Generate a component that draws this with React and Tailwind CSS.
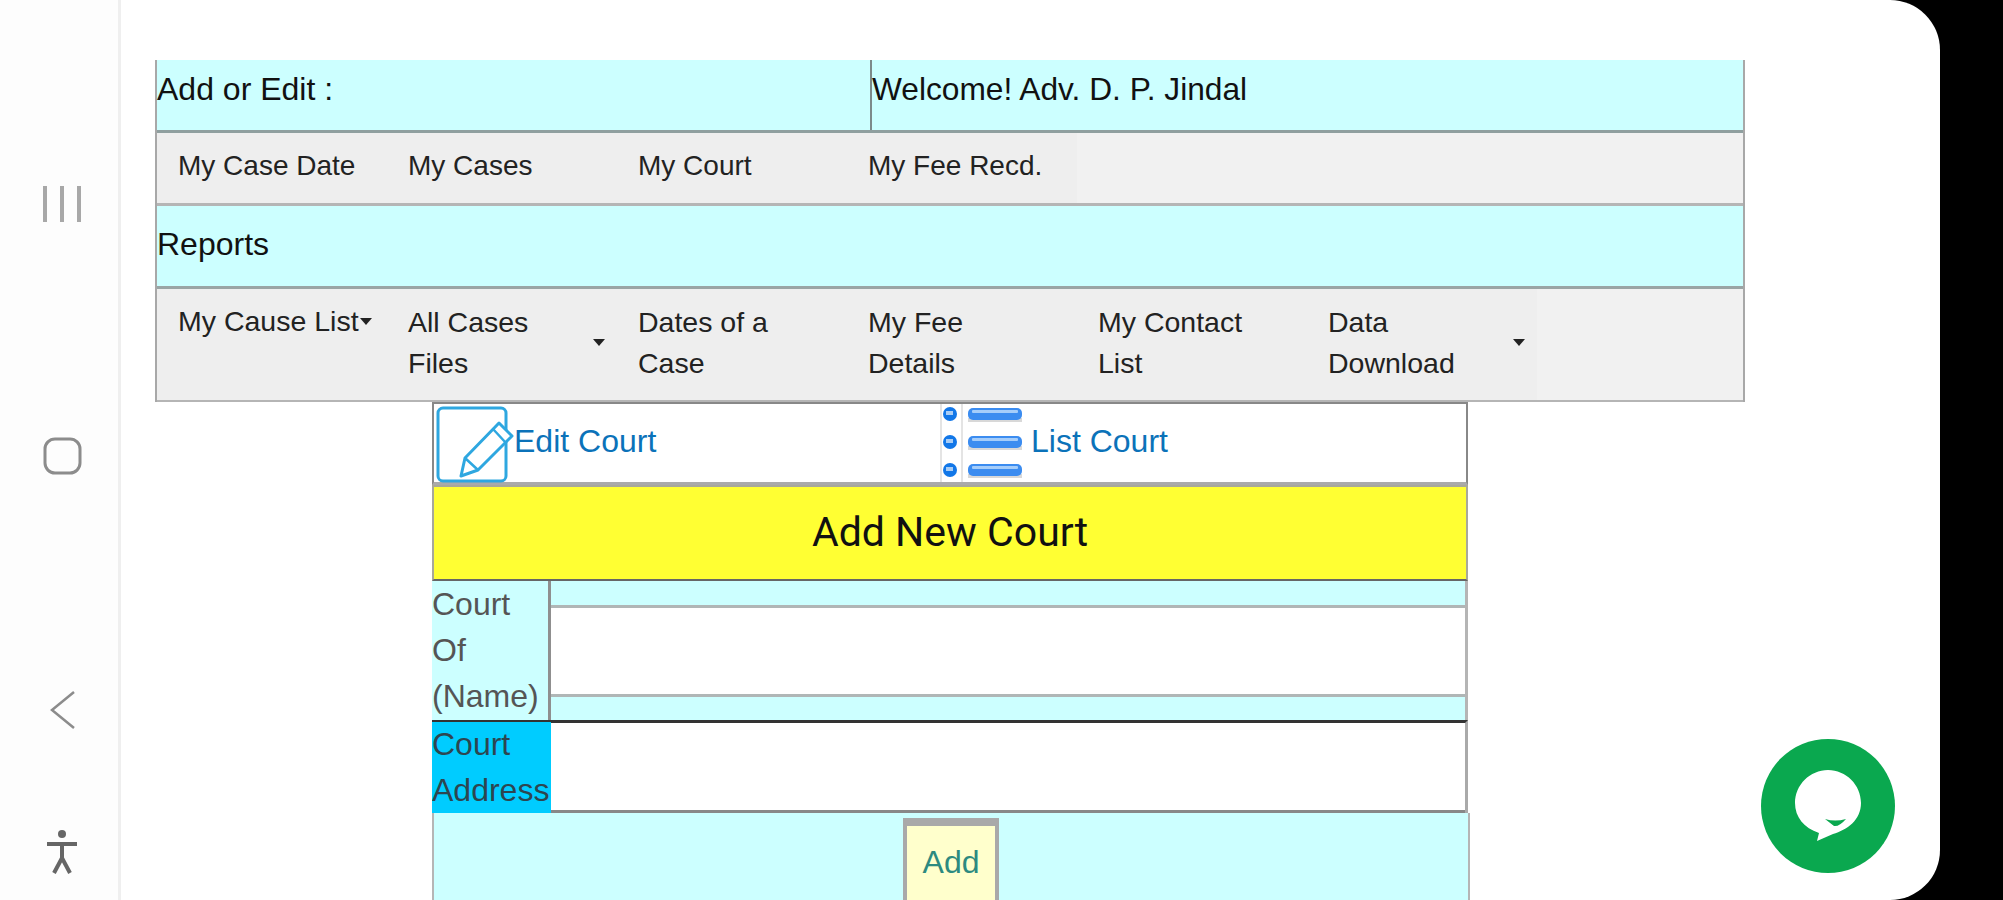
const sans = 'font-["Liberation_Sans",Arial,sans-serif]'

function Caret({ className = '' }) {
  return (
    <svg viewBox="0 0 12 7" className={`w-[12px] h-[7px] shrink-0 ${className}`}>
      <path d="M0 0h12L6 7z" fill="#222" />
    </svg>
  )
}

function NavCell({ children, caret, nowrap }) {
  return (
    <div className={`w-[230px] flex items-center justify-between bg-[#eeeeee] pl-[21px] pr-[12px] ${nowrap ? 'whitespace-nowrap pb-[4px]' : 'pb-[4px]'}`}>
      <span className={nowrap ? '' : 'max-w-[160px]'}>{children}</span>
      {caret && <Caret />}
    </div>
  )
}

function EditIcon() {
  return (
    <svg viewBox="0 0 72 78" className="w-[72px] h-[78px] shrink-0 overflow-visible" fill="none" stroke="#2ea7e0">
      <rect x="3" y="4" width="68" height="73" rx="5" strokeWidth="3" />
      <path d="M77 32 L64 19 L30 54 L26 72 L43 66 Z" fill="#fff" strokeWidth="3" strokeLinejoin="round" />
      <path d="M58 25 L71 39 M30 54 L43 66" strokeWidth="2.5" />
    </svg>
  )
}

function ListIcon() {
  const rows = [4, 32, 60]
  return (
    <svg viewBox="0 0 82 78" className="w-[82px] h-[78px] shrink-0">
      <path d="M1 0V78M22 0V78" stroke="#e4e4e4" strokeWidth="2" />
      {rows.map((y) => (
        <g key={y}>
          <rect x="28" y={y + 10} width="56" height="4" fill="#d8d8d8" />
          <circle cx="10" cy={y + 6} r="7" fill="#1277e8" />
          <rect x="6" y={y + 3} width="7" height="4" fill="#a9cdf5" />
          <rect x="28" y={y} width="54" height="12" rx="5" fill="#3b8cf0" />
          <rect x="32" y={y + 2} width="46" height="3" rx="1" fill="#a5cdfa" />
        </g>
      ))}
    </svg>
  )
}

function RailIcons() {
  return (
    <div className="w-[121px] h-full shrink-0 bg-[#fdfdfd] border-r-[3px] border-[#efefef]">
      <svg viewBox="0 0 118 900" className="w-[118px] h-[900px]" fill="none" stroke="#8c8c8c">
        <path d="M45 186V222M62 186V222M79 186V222" strokeWidth="4" stroke="#a8a8a8" />
        <rect x="45" y="439" width="35" height="34" rx="10" strokeWidth="3" />
        <path d="M74 692L52 710L74 728" strokeWidth="2.5" />
        <circle cx="62" cy="834" r="4" fill="#666" stroke="none" />
        <path d="M47 844H77M62 844V860M62 858L54 873M62 858L70 873" stroke="#666" strokeWidth="4" />
      </svg>
    </div>
  )
}

export default function App() {
  return (
    <div className={`w-[2003px] h-[900px] overflow-hidden bg-black flex ${sans}`}>
      <div className="w-[1940px] h-full flex bg-white rounded-r-[50px] overflow-hidden">
        <RailIcons />
        <main className="flex-1 pt-[60px] pl-[34px] relative">
          {/* 顶部表格 */}
          <div className="w-[1590px] border-l-2 border-r-2 border-[#a8a8a8] text-[32px] text-[#111]">
            <div className="h-[73px] bg-[#ccffff] border-b-[3px] border-[#8f9f9f] flex">
              <div className="w-[715px] pt-[7px] leading-[44px] border-r-2 border-[#7c8a8a]">Add or Edit :</div>
              <div className="pt-[7px] leading-[44px] text-[31.7px]">Welcome! Adv. D. P. Jindal</div>
            </div>
            <div className="h-[73px] bg-[#f1f1f1] border-b-[3px] border-[#b5b5b5] flex text-[28px] text-[#222]">
              <NavCell nowrap>My Case Date</NavCell>
              <NavCell nowrap>My Cases</NavCell>
              <NavCell nowrap>My Court</NavCell>
              <NavCell nowrap>My Fee Recd.</NavCell>
            </div>
            <div className="h-[83px] pb-[4px] bg-[#ccffff] border-b-[3px] border-[#9aa5a5] flex items-center">Reports</div>
            <div className="h-[113px] bg-[#f1f1f1] border-b-2 border-[#b5b5b5] flex text-[28.5px] leading-[41px] text-[#222]">
              <div className="w-[230px] flex items-start bg-[#eeeeee] pl-[21px] pt-[12px] whitespace-nowrap">
                My Cause List<Caret className="mt-[17px] ml-[1px]" />
              </div>
              <NavCell caret>All Cases Files</NavCell>
              <NavCell>Dates of a Case</NavCell>
              <NavCell>My Fee Details</NavCell>
              <NavCell>My Contact List</NavCell>
              <NavCell caret>Data Download</NavCell>
            </div>
          </div>

          {/* 法院表单 */}
          <div className="w-[1036px] ml-[277px]">
            <div className="h-[83px] flex items-center border-2 border-b-[3px] border-[#888] border-b-[#aaa] bg-white pl-[1px] text-[32px] text-[#0b72b9]">
              <div className="w-[505px] flex items-center">
                <EditIcon />
                <span className="ml-[7px] -mt-[5px]">Edit Court</span>
              </div>
              <div className="flex items-center">
                <ListIcon />
                <span className="ml-[9px] -mt-[5px]">List Court</span>
              </div>
            </div>
            <div className="h-[96px] bg-[#ffff33] border-2 border-[#a8a89a] border-b-[#666] flex items-center justify-center font-['Roboto',sans-serif] text-[41px] text-[#111]">
              Add New Court
            </div>
            <div className="flex h-[139px] bg-[#ccffff] text-[32px] leading-[46px] text-[#555] border-r-[3px] border-[#b5b5b5]">
              <div className="w-[119px] shrink-0 border-r-[3px] border-[#8f8f8f]">
                Court
                <br />
                Of
                <br />
                (Name)
              </div>
              <div className="flex-1 pt-[24px]">
                <div className="h-[92px] bg-white border-t-[3px] border-b-[3px] border-[#b0b6b6]" />
              </div>
            </div>
            <div className="flex h-[93px] text-[32px] leading-[46px] text-[#2d4650] border-t-[3px] border-[#333] border-r-[3px] border-r-[#aaa]">
              <div className="w-[119px] shrink-0 bg-[#00ccff] whitespace-nowrap overflow-hidden -mt-[1px]">
                <div className="-mt-[1px]">
                  Court
                  <br />
                  Address
                </div>
              </div>
              <div className="flex-1 bg-white border-b-[3px] border-[#888]" />
            </div>
            <div className="h-[100px] w-[1038px] bg-[#ccffff] border-x-2 border-[#b5b5b5] flex justify-center pt-[5px]">
              <button className="w-[96px] h-[100px] shrink-0 bg-[#ffffcc] border-x-4 border-t-8 border-[#a9a9a9] pb-[21px] text-[32px] text-[#2d8a80]">
                Add
              </button>
            </div>
          </div>

          {/* 聊天按钮 */}
          <div className="absolute left-[1640px] top-[739px] w-[134px] h-[134px] rounded-full bg-[#0aa84f] flex items-center justify-center">
            <svg viewBox="0 0 66 72" className="w-[66px] h-[72px]">
              <path d="M33 0C51 0 66 15 66 33C66 50 52 60 38 64L22 71L24 63C9 58 0 47 0 33C0 15 15 0 33 0Z" fill="#fff" />
              <path d="M30 49Q40 52 51 49Q44 57 39 56Z" fill="#0aa84f" />
            </svg>
          </div>
        </main>
      </div>
    </div>
  )
}
